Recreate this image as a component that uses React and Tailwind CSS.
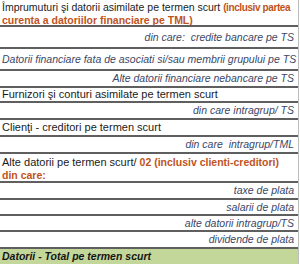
const rows = [
  { h: "h-[27px]", kind: "head1" },
  { h: "h-[22px]", text: "din care:  credite bancare pe TS", kind: "right" },
  { h: "h-[22px]", text: "Datorii financiare fata de asociati si/sau membrii grupului pe TS", kind: "left-it" },
  { h: "h-[17px]", text: "Alte datorii financiare nebancare pe TS", kind: "right" },
  { h: "h-[15px]", text: "Furnizori şi conturi asimilate pe termen scurt", kind: "plain" },
  { h: "h-[17px]", text: "din care intragrup/ TS", kind: "right" },
  { h: "h-[17px]", text: "Clienţi - creditori pe termen scurt", kind: "plain" },
  { h: "h-[17px]", text: "din care  intragrup/TML", kind: "right" },
  { h: "h-[29px]", kind: "head2" },
  { h: "h-[17px]", text: "taxe de plata", kind: "right" },
  { h: "h-[16px]", text: "salarii de plata", kind: "right" },
  { h: "h-[16px]", text: "alte datorii intragrup/TS", kind: "right" },
  { h: "h-[17px]", text: "dividende de plata", kind: "right" },
];

function Cell({ row }) {
  if (row.kind === "head1") {
    return (
      <div className="px-[2px] pt-[1px] leading-[13px] whitespace-pre text-[10.5px] text-[#1b1b1b]">
        Împrumuturi şi datorii asimilate pe termen scurt{" "}
        <span className="font-bold text-[10px] tracking-[-0.4px] text-[#c0531c]">(inclusiv partea</span>
        <br />
        <span className="font-bold text-[10.5px] text-[#c0531c]">curenta a datoriilor financiare pe TML)</span>
      </div>
    );
  }
  if (row.kind === "head2") {
    return (
      <div className="px-[2px] pt-[2px] leading-[13px] whitespace-pre text-[#1b1b1b]">
        Alte datorii pe termen scurt/{" "}
        <span className="font-bold text-[10.5px] text-[#c0531c]">02 (inclusiv clienti-creditori)</span>
        <br />
        <span className="font-bold text-[10.5px] text-[#c0531c]">din care:</span>
      </div>
    );
  }
  if (row.kind === "right") {
    return <div className="flex h-full items-center justify-end pr-[4px] italic text-[10.5px] whitespace-pre text-[#3b4766]">{row.text}</div>;
  }
  if (row.kind === "left-it") {
    return <div className="flex h-full items-center pl-[2px] italic text-[10.5px] whitespace-pre text-[#3b4766]">{row.text}</div>;
  }
  return <div className="flex h-full items-center pl-[2px] whitespace-pre text-[#1b1b1b]">{row.text}</div>;
}

export default function App() {
  return (
    <div className="w-[300px] h-[269px] bg-white font-['Liberation_Sans',Arial,sans-serif] text-[11px] leading-[13px] overflow-hidden">
      <div className="flex flex-col border-r border-[#bdbdbd] w-[299px]">
        {rows.map((r, i) => (
          <div key={i} className={`${r.h} border-b-2 border-[#5f5f5f] overflow-hidden`}>
            <Cell row={r} />
          </div>
        ))}
        <div className="h-[15px] bg-[#c4d79b] flex items-center pl-[2px] font-bold italic text-[10.5px] text-[#141414]">
          Datorii - Total pe termen scurt
        </div>
      </div>
    </div>
  );
}
